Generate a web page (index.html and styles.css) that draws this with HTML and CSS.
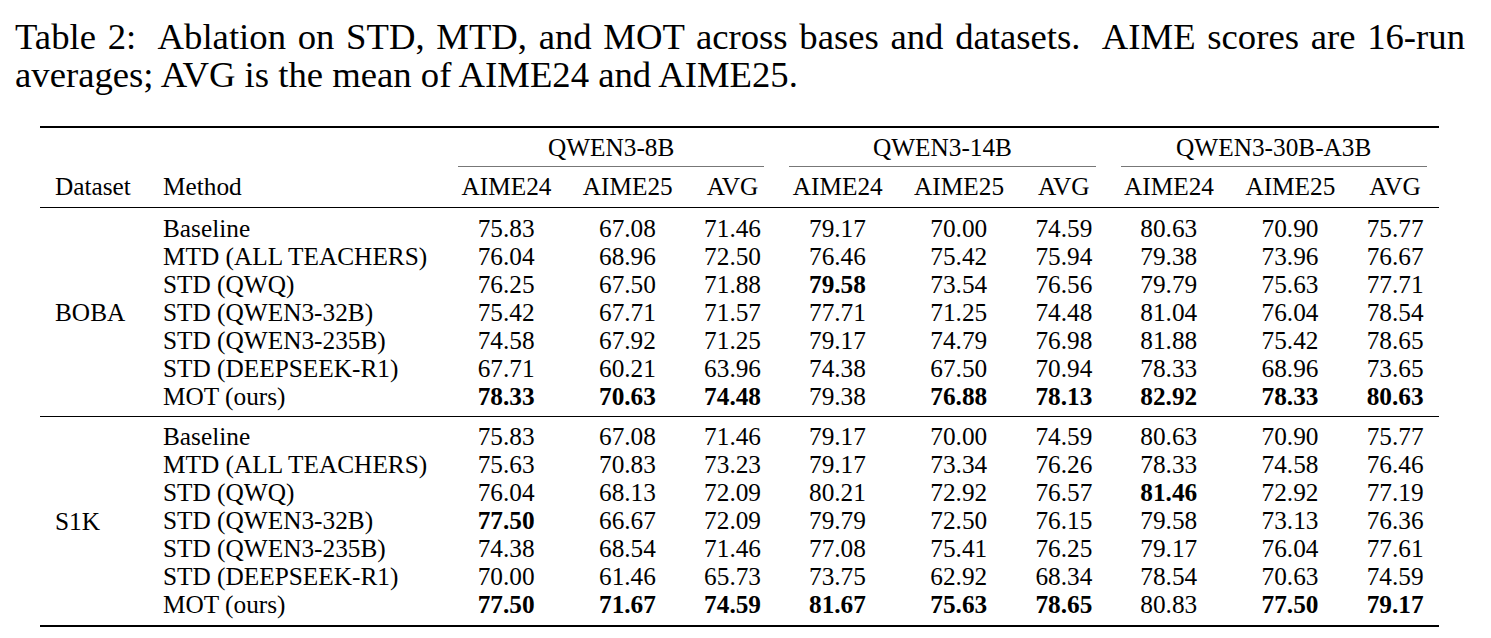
FILE: index.html
```html
<!DOCTYPE html>
<html lang="en">
<head>
<meta charset="utf-8">
<title>Table 2: Ablation on STD, MTD, and MOT</title>
<link rel="stylesheet" href="styles.css">
</head>
<body>
<div class="page">
  <p class="caption">Table 2:&nbsp; Ablation on STD, MTD, and MOT across bases and datasets.&nbsp; AIME scores are 16-run averages; AVG is the mean of AIME24 and AIME25.</p>

  <table class="results">
    <colgroup>
      <col class="c-dataset">
      <col class="c-method">
      <col class="c-a"><col class="c-b"><col class="c-avg">
      <col class="c-a"><col class="c-b"><col class="c-avg">
      <col class="c-a"><col class="c-b"><col class="c-avg">
    </colgroup>
    <thead>
      <tr class="head-groups">
        <th colspan="2"></th>
        <th colspan="3"><div class="group-label">QWEN3-8B</div></th>
        <th colspan="3"><div class="group-label">QWEN3-14B</div></th>
        <th colspan="3"><div class="group-label">QWEN3-30B-A3B</div></th>
      </tr>
      <tr class="head-cols">
        <th class="left first">Dataset</th>
        <th class="left">Method</th>
        <th>AIME24</th><th>AIME25</th><th>AVG</th>
        <th>AIME24</th><th>AIME25</th><th>AVG</th>
        <th>AIME24</th><th>AIME25</th><th>AVG</th>
      </tr>
    </thead>
    <tbody class="group g1">
      <tr>
        <td class="left first dataset" rowspan="7">BOBA</td>
        <td class="left">Baseline</td>
        <td>75.83</td><td>67.08</td><td>71.46</td>
        <td>79.17</td><td>70.00</td><td>74.59</td>
        <td>80.63</td><td>70.90</td><td>75.77</td>
      </tr>
      <tr>
        <td class="left">MTD (ALL TEACHERS)</td>
        <td>76.04</td><td>68.96</td><td>72.50</td>
        <td>76.46</td><td>75.42</td><td>75.94</td>
        <td>79.38</td><td>73.96</td><td>76.67</td>
      </tr>
      <tr>
        <td class="left">STD (QWQ)</td>
        <td>76.25</td><td>67.50</td><td>71.88</td>
        <td class="best">79.58</td><td>73.54</td><td>76.56</td>
        <td>79.79</td><td>75.63</td><td>77.71</td>
      </tr>
      <tr>
        <td class="left">STD (QWEN3-32B)</td>
        <td>75.42</td><td>67.71</td><td>71.57</td>
        <td>77.71</td><td>71.25</td><td>74.48</td>
        <td>81.04</td><td>76.04</td><td>78.54</td>
      </tr>
      <tr>
        <td class="left">STD (QWEN3-235B)</td>
        <td>74.58</td><td>67.92</td><td>71.25</td>
        <td>79.17</td><td>74.79</td><td>76.98</td>
        <td>81.88</td><td>75.42</td><td>78.65</td>
      </tr>
      <tr>
        <td class="left">STD (DEEPSEEK-R1)</td>
        <td>67.71</td><td>60.21</td><td>63.96</td>
        <td>74.38</td><td>67.50</td><td>70.94</td>
        <td>78.33</td><td>68.96</td><td>73.65</td>
      </tr>
      <tr>
        <td class="left">MOT (ours)</td>
        <td class="best">78.33</td><td class="best">70.63</td><td class="best">74.48</td>
        <td>79.38</td><td class="best">76.88</td><td class="best">78.13</td>
        <td class="best">82.92</td><td class="best">78.33</td><td class="best">80.63</td>
      </tr>
    </tbody>
    <tbody class="group g2">
      <tr>
        <td class="left first dataset" rowspan="7">S1K</td>
        <td class="left">Baseline</td>
        <td>75.83</td><td>67.08</td><td>71.46</td>
        <td>79.17</td><td>70.00</td><td>74.59</td>
        <td>80.63</td><td>70.90</td><td>75.77</td>
      </tr>
      <tr>
        <td class="left">MTD (ALL TEACHERS)</td>
        <td>75.63</td><td>70.83</td><td>73.23</td>
        <td>79.17</td><td>73.34</td><td>76.26</td>
        <td>78.33</td><td>74.58</td><td>76.46</td>
      </tr>
      <tr>
        <td class="left">STD (QWQ)</td>
        <td>76.04</td><td>68.13</td><td>72.09</td>
        <td>80.21</td><td>72.92</td><td>76.57</td>
        <td class="best">81.46</td><td>72.92</td><td>77.19</td>
      </tr>
      <tr>
        <td class="left">STD (QWEN3-32B)</td>
        <td class="best">77.50</td><td>66.67</td><td>72.09</td>
        <td>79.79</td><td>72.50</td><td>76.15</td>
        <td>79.58</td><td>73.13</td><td>76.36</td>
      </tr>
      <tr>
        <td class="left">STD (QWEN3-235B)</td>
        <td>74.38</td><td>68.54</td><td>71.46</td>
        <td>77.08</td><td>75.41</td><td>76.25</td>
        <td>79.17</td><td>76.04</td><td>77.61</td>
      </tr>
      <tr>
        <td class="left">STD (DEEPSEEK-R1)</td>
        <td>70.00</td><td>61.46</td><td>65.73</td>
        <td>73.75</td><td>62.92</td><td>68.34</td>
        <td>78.54</td><td>70.63</td><td>74.59</td>
      </tr>
      <tr>
        <td class="left">MOT (ours)</td>
        <td class="best">77.50</td><td class="best">71.67</td><td class="best">74.59</td>
        <td class="best">81.67</td><td class="best">75.63</td><td class="best">78.65</td>
        <td>80.83</td><td class="best">77.50</td><td class="best">79.17</td>
      </tr>
    </tbody>
  </table>
</div>
</body>
</html>
```

FILE: styles.css
```css
html, body {
  margin: 0;
  padding: 0;
  background: #ffffff;
}

body {
  font-family: "Liberation Serif", "Times New Roman", serif;
  color: #000000;
}

.page {
  padding-top: 18px;
}

.caption {
  margin: 0 0 0 15px;
  width: 1450px;
  font-size: 36.7px;
  line-height: 38.4px;
  text-align: justify;
}

.results {
  margin: 31px 0 0 40px;
  width: 1399.4px;
  table-layout: fixed;
  border-collapse: separate;
  border-spacing: 0;
  font-size: 25.3px;
  line-height: 28px;
}

.c-dataset { width: 107px; }
.c-method { width: 298.5px; }
.c-a, .c-b { width: 121.3px; }
.c-avg { width: 88.7px; }

.results th,
.results td {
  padding: 0 16px;
  font-weight: normal;
  text-align: center;
  white-space: nowrap;
}

.results .left { text-align: left; }
.results .first { padding-left: 15px; }

.results .best { font-weight: bold; }

/* header: group row with top rule and cmidrules */
.head-groups th {
  border-top: 2px solid #000000;
  padding: 5.6px 0 0 0;
  vertical-align: top;
}

.group-label {
  margin: 0 12.5px;
  padding-bottom: 5px;
  border-bottom: 1px solid #777777;
}

.head-cols th {
  padding-top: 5px;
  padding-bottom: 7px;
  border-bottom: 1px solid #000000;
}

/* body groups */
.g1 tr:first-child td { padding-top: 5.2px; }
.g1 tr:last-child td { padding-bottom: 6.5px; }

.g2 tr:first-child td {
  border-top: 1px solid #000000;
  padding-top: 4.7px;
}
.g2 tr:last-child td { padding-bottom: 7px; }
.g2 tr:last-child td,
.g2 td.dataset { border-bottom: 2px solid #000000; }

.results .group td.dataset {
  vertical-align: middle;
  padding-top: 0;
  padding-bottom: 0;
}
```
